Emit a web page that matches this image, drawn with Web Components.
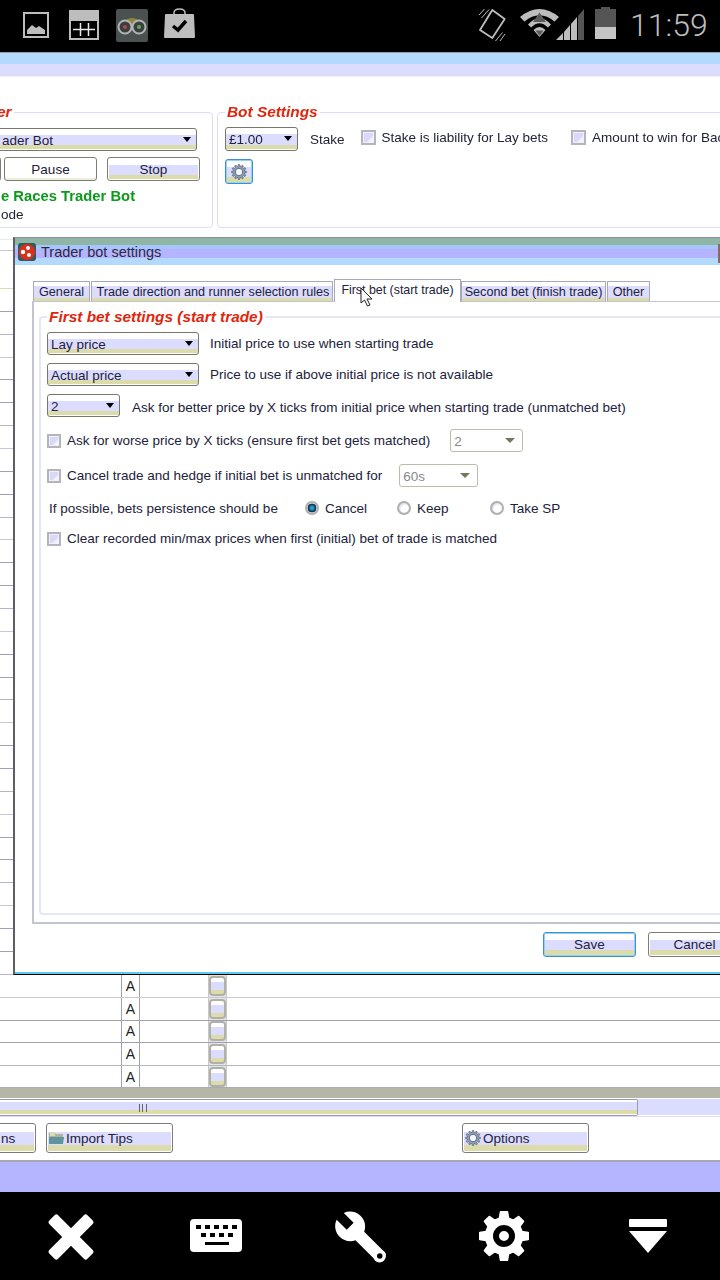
<!DOCTYPE html>
<html>
<head>
<meta charset="utf-8">
<title>Trader bot settings</title>
<style>
html, body {
	margin: 0;
	padding: 0;
	width: 720px;
	height: 1280px;
	overflow: hidden;
	background: #000;
	font: 13.5px "Liberation Sans", Arial, sans-serif;
	color: #22223a;
}
</style>
</head>
<body>
<app-root></app-root>

<script>
const gearPath = (c, outer, root, teeth) => {
	const step = Math.PI * 2 / teeth;
	let d = '';
	for (let i = 0; i < teeth; i++) {
		const a = i * step;
		const points = [
			[root, a - step * 0.32],
			[outer, a - step * 0.18],
			[outer, a + step * 0.18],
			[root, a + step * 0.32]
		];
		points.forEach(([r, t], n) => {
			const x = (c + r * Math.cos(t)).toFixed(2);
			const y = (c + r * Math.sin(t)).toFixed(2);
			d += `${i === 0 && n === 0 ? 'M' : 'L'}${x} ${y}`;
		});
	}
	return d + 'Z';
};

const define = (name, html, setup) => {
	const template = document.createElement('template');
	template.innerHTML = html;

	class Element extends HTMLElement {
		connectedCallback() {
			if (this.shadowRoot) {
				return;
			}
			const shadowRoot = this.attachShadow({ mode: 'open' });
			shadowRoot.appendChild(template.content.cloneNode(true));
			if (setup) {
				setup(shadowRoot, this);
			}
		}
	}

	window.customElements.define(name, Element);
};

define('gear-icon', `
<style>
:host { display: block; width: 16px; height: 16px; flex: none; }
svg { display: block; width: 100%; height: 100%; }
</style>
<svg viewBox="0 0 32 32">
	<path id="body" fill="#8ea0b4" stroke="#5d6c80" stroke-width="1.5"></path>
	<circle cx="16" cy="16" r="7.5" fill="#f4f6fa" stroke="#5d6c80" stroke-width="2"></circle>
</svg>
`, (root) => {
	root.querySelector('#body').setAttribute('d', gearPath(16, 15, 11.5, 12));
});

define('win-button', `
<style>
:host {
	display: flex;
	align-items: center;
	justify-content: center;
	gap: 2px;
	box-sizing: border-box;
	flex: none;
	height: 24px;
	border: 1px solid #7d7d78;
	border-radius: 3px;
	background: linear-gradient(#fff 0 30%, #dcdcff 30% 76%, #dcdcaa 76% 96%, #fff 96%);
	box-shadow: inset 0 0 0 1px #fff;
	color: #22223a;
	font-size: 13.5px;
	white-space: nowrap;
	overflow: hidden;
}
:host([plain]) { background: #fff; box-shadow: inset 0 -2px 0 #eeeed8; }
:host([start]) { justify-content: flex-start; padding-left: 2px; }
:host([focus]) { border-color: #3f8fd0; box-shadow: inset 0 0 0 1px #8fd4f4; }
</style>
<slot></slot>
`);

define('win-select', `
<style>
:host {
	display: flex;
	align-items: center;
	justify-content: space-between;
	box-sizing: border-box;
	flex: none;
	height: 23px;
	padding: 1px 5px 0 3px;
	border: 1px solid #77776a;
	border-radius: 3px;
	background: linear-gradient(#fff 0 28%, #dcdcff 28% 78%, #dcdcaa 78% 96%, #fff 96%);
	color: #22223a;
	font-size: 13.5px;
	white-space: nowrap;
}
:host([disabled]) { background: #fff; border-color: #bdbdae; color: #8a8a8a; padding: 1px 7px 0 3px; }
i {
	width: 0;
	height: 0;
	margin-top: -2px;
	border: 4.5px solid transparent;
	border-top: 5px solid #000;
	border-bottom: 0;
}
:host([disabled]) i { border-top-color: #77775e; border-left-width: 5px; border-right-width: 5px; }
</style>
<span><slot></slot></span><i></i>
`);

define('win-check', `
<style>
:host {
	display: flex;
	align-items: center;
	gap: 6px;
	font-size: 13.5px;
	color: #22223a;
	white-space: nowrap;
}
b {
	flex: none;
	box-sizing: border-box;
	width: var(--check, 15px);
	height: var(--check, 15px);
	border: 2px solid #b4b4bc;
	background: linear-gradient(135deg, #d8d8f8 0 55%, #f4f4ff 75%);
	box-shadow: inset 0 0 0 1px #f0f0f6;
}
</style>
<b></b><span><slot></slot></span>
`);

define('win-radio', `
<style>
:host {
	display: flex;
	align-items: center;
	gap: 6px;
	font-size: 13.5px;
	color: #22223a;
	white-space: nowrap;
}
b {
	flex: none;
	box-sizing: border-box;
	width: 14px;
	height: 14px;
	border: 2px solid #b0b0ac;
	border-radius: 50%;
	background: radial-gradient(circle at 60% 60%, #fff 0 40%, #d8d8f0 75%);
}
:host([checked]) b {
	background: radial-gradient(circle at 50% 50%, #2fa0c0 0 18%, #0c3c62 50%, #0c3c62 60%, #e8e8f0 66%);
}
</style>
<b></b><span><slot></slot></span>
`);

define('group-box', `
<style>
:host {
	display: block;
	box-sizing: border-box;
	border: 1px solid #dcdcfa;
	border-radius: 4px;
	background: #fff;
}
.legend {
	display: block;
	width: fit-content;
	margin: -10px 0 0 var(--legend-left, 8px);
	padding: 0 2px;
	height: 18px;
	line-height: 18px;
	background: #fff;
	color: #e0260c;
	font-size: 15.4px;
	font-weight: bold;
	font-style: italic;
	white-space: nowrap;
}
</style>
<div class="legend"><slot name="legend"></slot></div>
<slot></slot>
`);

define('status-bar', `
<style>
:host {
	display: flex;
	align-items: flex-start;
	flex: none;
	height: 52px;
	background: #000;
	overflow: hidden;
}
svg { display: block; flex: none; overflow: visible; }
.clock {
	margin: 6px 0 0 14px;
	color: #bdbdbd;
	font: 300 32px/38px Roboto, sans-serif;
	white-space: nowrap;
}
</style>
<svg style="margin:12px 0 0 23px" width="26" height="26" viewBox="0 0 26 26">
	<rect x="1" y="1" width="24" height="24" fill="none" stroke="#bdbdbd" stroke-width="2"></rect>
	<path d="M4 22V18l5-5 4 3 3-2 3 2 3 2v4z" fill="#bdbdbd"></path>
</svg>
<svg style="margin:10px 0 0 20px" width="30" height="30" viewBox="0 0 30 30">
	<path d="M0 0h30v30H0z" fill="#bdbdbd"></path>
	<path d="M2 11h26v17H2z" fill="#000"></path>
	<path d="M4 19.500h22M11.500 13v13M19.500 13v13" stroke="#e8e8e8" stroke-width="1.500" fill="none"></path>
</svg>
<svg style="margin:9px 0 0 17px" width="32" height="33" viewBox="0 0 32 33">
	<rect width="32" height="33" rx="2" fill="#4b5151"></rect>
	<path d="M10 11q6-4 12 0l-6 7z" fill="#8e8a3c"></path>
	<circle cx="9" cy="18" r="6.500" fill="#3a3f3f" stroke="#b4b4b4" stroke-width="2"></circle>
	<circle cx="23" cy="18" r="6.500" fill="#3a3f3f" stroke="#b4b4b4" stroke-width="2"></circle>
	<circle cx="9" cy="18" r="2" fill="#b04a4a"></circle>
	<circle cx="23" cy="18" r="2" fill="#62a85a"></circle>
</svg>
<svg style="margin:8px 0 0 16px" width="31" height="31" viewBox="0 0 31 31">
	<path d="M10 7V5q0-4 5.500-4T21 5v2" fill="none" stroke="#bdbdbd" stroke-width="1.500"></path>
	<path d="M2 6h27q1 0 1 1l1 22q0 1-1 1H1q-1 0-1-1L1 7q0-1 1-1z" fill="#bdbdbd"></path>
	<path d="M9 18l5 4 8-9" fill="none" stroke="#000" stroke-width="3.500"></path>
</svg>
<svg style="margin:9px 0 0 283px" width="28" height="33" viewBox="0 0 28 33">
	<path d="M14.300 1L26.700 10 14.300 29 2 21Z" fill="none" stroke="#bdbdbd" stroke-width="1.800" stroke-linejoin="round"></path>
	<path d="M3.500 9L11 .5M1 6L6.500 0M17.500 32L24.500 23.500M22 32L27 25" fill="none" stroke="#bdbdbd" stroke-width="1"></path>
</svg>
<svg style="margin:9px 0 0 14px" width="39" height="30" viewBox="0 0 39 30">
	<path d="M0 8Q19.500-8 39 8L34.500 12.500Q19.500 0 4.500 12.500Z" fill="#bdbdbd"></path>
	<path d="M8 15.500Q19.500 3 31 15.500L28 18.500Q19.500 10 11 18.500Z" fill="#bdbdbd"></path>
	<path d="M13.500 21Q19.500 15 25.500 21L19.500 28Z" fill="#bdbdbd"></path>
	<path d="M19.500 3.500L26 13H13Z" fill="#5c5c5c"></path>
	<path d="M15.500 21.500H23.500L19.500 27Z" fill="#5c5c5c"></path>
</svg>
<svg style="margin:9px 0 0 -3px" width="28" height="31" viewBox="0 0 28 31">
	<path d="M0 31L7 24v7z" fill="#bdbdbd"></path>
	<path d="M8 23l6-7v15H8z" fill="#bdbdbd"></path>
	<path d="M15 15l6-7v23h-6z" fill="#bdbdbd"></path>
	<path d="M22 7l6-7v31h-6z" fill="#555"></path>
</svg>
<svg style="margin:7px 0 0 11px" width="21" height="32" viewBox="0 0 21 32">
	<path d="M6 0h9v2h6v30H0V2h6z" fill="#555"></path>
	<path d="M0 20h21v12H0z" fill="#c4c4c4"></path>
</svg>
<div class="clock">11:59</div>
`);

define('bot-panel', `
<style>
:host {
	display: flex;
	flex: none;
	box-sizing: border-box;
	gap: 4px;
	height: 153px;
	padding: 35px 0 2px;
	margin-left: -10px;
	background: #fff;
}
.left { width: 223px; flex: none; --legend-left: 4px; }
.right { flex: 1; min-width: 0; margin-right: -20px; --legend-left: 7px; }
.sel { margin: 7px 0 0 6px; width: 200px; padding-left: 4px; }
.btns { display: flex; margin: 6px 0 0 5px; gap: 3px; }
.green { margin: 7px 0 0 10px; color: #0b9a1c; font-weight: bold; font-size: 14.800px; line-height: 17px; white-space: nowrap; }
.mode { margin: 2px 0 0 10px; line-height: 16px; white-space: nowrap; }
.row { display: flex; align-items: center; margin: 6px 0 0 7px; white-space: nowrap; }
.row win-select { height: 24px; }
.row win-check { margin-top: -3px; }
.gear { margin: 8px 0 0 7px; width: 28px; height: 25px; }
</style>
<group-box class="left">
	<span slot="legend">er</span>
	<win-select class="sel">ader Bot</win-select>
	<div class="btns">
		<win-button plain style="width:5px"></win-button>
		<win-button plain style="width:93px">Pause</win-button>
		<win-button style="width:93px;margin-left:7px">Stop</win-button>
	</div>
	<div class="green">e Races Trader Bot</div>
	<div class="mode">ode</div>
</group-box>
<group-box class="right">
	<span slot="legend">Bot Settings</span>
	<div class="row">
		<win-select style="width:73px">£1.00</win-select>
		<span style="margin-left:12px">Stake</span>
		<win-check style="margin-left:16px">Stake is liability for Lay bets</win-check>
		<win-check style="margin-left:23px">Amount to win for Bac</win-check>
	</div>
	<win-button class="gear" focus><gear-icon></gear-icon></win-button>
</group-box>
`);

define('data-grid', `
<style>
:host {
	display: flex;
	flex-direction: column;
	flex: 1;
	min-height: 0;
	background: #fff;
	border-top: 1px solid transparent;
	font-size: 14px;
}
.head { flex: none; height: 58px; box-sizing: border-box; }
.head div { height: 1px; }
.head .a { margin-top: 8px; background: #e8e8f4; }
.head .b { margin-top: 10px; background: #c8c8d4; }
.head .c { margin-top: 37px; background: #dcdcaa; }
.row {
	flex: 1;
	min-height: 0;
	display: grid;
	grid-template-columns: 121px 19px 68px 19px 1fr;
	box-sizing: border-box;
	border-bottom: 1px solid #a0a0b4;
}
.row:nth-child(4n+2) { border-bottom-color: #b4b4c4; }
.row:nth-child(4n+3) { border-bottom-color: #c8c8d6; }
.row:last-child { border-bottom: 0; }
.row > span { display: flex; align-items: center; justify-content: center; box-sizing: border-box; }
.letter { border-left: 1px solid #a0a0b8; border-right: 1px solid #a0a0b8; color: #222; }
.cell { border-left: 1px solid #c8c8c8; border-right: 1px solid #c8c8c8; background: #e4e4e8; }
.cell i {
	width: 17px;
	height: 20px;
	box-sizing: border-box;
	border: 2px solid #b0b0a6;
	border-radius: 4px;
	background: linear-gradient(#fff 0 25%, #dcdcff 25% 72%, #dcdcaa 72%);
}
</style>
<div class="head"><div class="a"></div><div class="b"></div><div class="c"></div></div>
<div id="rows" style="display:contents"></div>
`, (root) => {
	const rows = root.querySelector('#rows');
	const total = 35;
	for (let i = 0; i < total; i++) {
		const row = document.createElement('div');
		row.className = 'row';
		// only the last rows are not under the dialog
		const letter = i >= total - 5 ? 'A' : '';
		row.innerHTML = `<span></span><span class="letter">${letter}</span><span></span><span class="cell"><i></i></span><span></span>`;
		rows.appendChild(row);
	}
});

define('scroll-strip', `
<style>
:host { display: block; flex: none; background: #fff; }
.tan { height: 10px; background: #b5b5a8; border-top: 1px solid #aaaabc; margin-top: -1px; }
.track { display: flex; height: 17px; margin-top: 1px; background: linear-gradient(#dcdcff 0 94%, #fff 94%); }
.thumb {
	display: flex;
	align-items: center;
	box-sizing: border-box;
	width: 648px;
	margin-left: -10px;
	padding-left: 149px;
	border: 1px solid #9a9aa8;
	border-width: 1px 1px 1px 0;
	border-radius: 0 2px 2px 0;
	background: linear-gradient(#fff 0 12%, #dcdcff 12% 68%, #dcdcaa 68% 92%, #fff 92%);
}
.grip { width: 9px; height: 8px; background: repeating-linear-gradient(90deg, #666 0 1px, transparent 1px 3.500px); }
.line { height: 1px; background: #dcdcfa; }
</style>
<div class="tan"></div>
<div class="track"><div class="thumb"><div class="grip"></div></div></div>
<div class="line"></div>
`);

define('tool-strip', `
<style>
:host {
	display: flex;
	flex: none;
	box-sizing: border-box;
	height: 45px;
	padding: 6px 0 0 0;
	gap: 10px;
	margin-left: -10px;
	background: #fff;
	border-bottom: 2px solid #a8a8b0;
}
win-button { height: 30px; font-size: 13.5px; }
svg { flex: none; display: block; }
span { padding-top: 1px; }
</style>
<win-button style="width:46px" start><span style="margin-left:8px">ns</span></win-button>
<win-button style="width:127px" start>
	<svg width="15" height="15" viewBox="0 0 15 15">
		<path d="M0 2h6l1 1h7v3H0z" fill="#b4b494"></path>
		<path d="M1 1h5v4H1z" fill="#dcdcb4"></path>
		<path d="M0 13V6h15l-1 7z" fill="#5e93a2"></path>
	</svg>
	<span>Import Tips</span>
</win-button>
<win-button style="width:127px;margin-left:279px" start>
	<gear-icon></gear-icon>
	<span>Options</span>
</win-button>
`);

define('nav-bar', `
<style>
:host {
	display: grid;
	grid-template-columns: repeat(5, 1fr);
	flex: none;
	height: 88px;
	background: #000;
	place-items: center;
}
svg { display: block; }
</style>
<svg width="52" height="52" viewBox="-26 -26 52 52" style="margin:1px 2px 0 0">
	<rect x="-27" y="-6.250" width="54" height="12.500" rx="2.500" transform="rotate(45)" fill="#fff"></rect>
	<rect x="-27" y="-6.250" width="54" height="12.500" rx="2.500" transform="rotate(-45)" fill="#fff"></rect>
</svg>
<svg width="52" height="33" viewBox="0 0 52 33" style="margin-top:-1px">
	<rect width="52" height="33" rx="4" fill="#fff"></rect>
	<path d="M6 6h5v4H6zM15 6h5v4h-5zM24 6h5v4h-5zM33 6h5v4h-5zM42 6h5v4h-5zM11 14h5v4h-5zM20 14h5v4h-5zM29 14h5v4h-5zM38 14h5v4h-5zM15 23h24v3H15z" fill="#000"></path>
</svg>
<svg width="55" height="55" viewBox="0 0 24 24">
	<path d="M22.700 19l-9.100-9.100c.9-2.300.4-5-1.500-6.900-2-2-5-2.400-7.400-1.300L9 6 6 9 1.600 4.700C.4 7.100.9 10.100 2.900 12.100c1.900 1.900 4.600 2.400 6.900 1.500l9.100 9.100c.4.400 1 .4 1.400 0l2.300-2.300c.5-.4.500-1.100.1-1.400z" fill="#fff"></path>
	<circle cx="20.300" cy="20.500" r="2.800" fill="#fff"></circle>
	<circle cx="20.400" cy="20.500" r="1.200" fill="#000"></circle>
</svg>
<svg id="gear" width="52" height="52" viewBox="0 0 52 52" style="margin-top:-1px">
	<path fill="#fff" stroke="#fff" stroke-width="1.500" stroke-linejoin="round"></path>
	<circle cx="26" cy="26" r="8" fill="#fff" stroke="#000" stroke-width="6"></circle>
</svg>
<svg width="38" height="34" viewBox="0 0 38 34" style="margin-top:-1px">
	<rect width="38" height="8" rx="1" fill="#fff"></rect>
	<path d="M0 12h38L19 34z" fill="#fff"></path>
</svg>
`, (root) => {
	root.querySelector('#gear path').setAttribute('d', gearPath(26, 24.5, 18.5, 8));
});

define('settings-dialog', `
<style>
:host {
	position: absolute;
	left: 13px;
	top: 237px;
	display: flex;
	flex-direction: column;
	box-sizing: border-box;
	width: 760px;
	height: 738px;
	background: #fff;
	border-top: 1px solid #8c8c98;
	border-left: 2px solid #5e5e66;
	box-shadow: inset 0 -2px 0 #62c8f0;
	border-bottom: 1px solid #000;
	--check: 14px;
}
.title {
	display: flex;
	align-items: center;
	flex: none;
	height: 27px;
	gap: 5px;
	padding-left: 3px;
	background: linear-gradient(#8fb5a5 0 26%, #a5c5ff 26% 41%, #b5b5ff 41% 74%, #b3d9ff 74%);
	font-size: 14.500px;
	color: #2a2a3c;
}
.title svg { flex: none; display: block; }
.title span { padding-top: 1px; }
.close { position: absolute; left: 703px; top: 6px; width: 20px; height: 19px; background: #8a6a5c; }
.tabs {
	display: flex;
	align-items: flex-end;
	flex: none;
	height: 23px;
	margin: 14px 0 0 18px;
	position: relative;
	z-index: 1;
}
.tab {
	box-sizing: border-box;
	height: 20px;
	margin-bottom: 1px;
	margin-right: 1px;
	padding: 3px 0 0 0;
	text-align: center;
	border: 1px solid #a8a8b8;
	border-bottom: 0;
	background: linear-gradient(#fff 0 22%, #dcdcff 22% 84%, #dcdcaa 84%);
	font-size: 12.650px;
	color: #22223a;
	white-space: nowrap;
}
.tab.on { height: 23px; margin: 0; background: #fff; padding-top: 3px; font-size: 12.400px; }
.pane {
	flex: none;
	box-sizing: border-box;
	height: 623px;
	margin: -1px 0 0 17px;
	padding: 14px 0 7px 5px;
	border: 2px solid #c4c4d0;
	border-width: 1px 0 2px 2px;
}
group-box { height: 100%; border-width: 2px; border-color: #e6e6fa; border-right: 0; --legend-left: 6px; }
.form { display: flex; flex-direction: column; padding: 6px 0 0 6px; }
.line { display: flex; align-items: center; white-space: nowrap; }
.line > span { color: #22223a; }
.low { padding-top: 3px; }
.buttons { display: flex; flex: none; margin: 8px 0 0 528px; gap: 12px; }
.buttons win-button { width: 93px; height: 25px; }
.cursor { position: absolute; left: 345px; top: 49px; z-index: 2; display: block; }
</style>
<div class="title">
	<svg width="18" height="18" viewBox="0 0 18 18">
		<rect width="18" height="18" rx="3" fill="#2f5a60"></rect>
		<circle cx="9" cy="9" r="8" fill="#d8301c"></circle>
		<circle cx="5" cy="9" r="2.200" fill="#fff"></circle>
		<circle cx="10" cy="5" r="2" fill="#fff"></circle>
		<circle cx="11" cy="12" r="2" fill="#fff"></circle>
	</svg>
	<span>Trader bot settings</span>
</div>
<div class="close"></div>
<div class="tabs">
	<div class="tab" style="width:57px">General</div>
	<div class="tab" style="width:242px;padding-left:2px">Trade direction and runner selection rules</div>
	<div class="tab on" style="width:127px">First bet (start trade)</div>
	<div class="tab" style="width:145px">Second bet (finish trade)</div>
	<div class="tab" style="width:43px">Other</div>
</div>
<div class="pane">
	<group-box>
		<span slot="legend">First bet settings (start trade)</span>
		<div class="form">
			<div class="line">
				<win-select style="width:152px">Lay price</win-select>
				<span style="margin-left:11px">Initial price to use when starting trade</span>
			</div>
			<div class="line" style="margin-top:8px">
				<win-select style="width:152px">Actual price</win-select>
				<span style="margin-left:11px">Price to use if above initial price is not available</span>
			</div>
			<div class="line" style="margin-top:8px">
				<win-select style="width:73px">2</win-select>
				<span class="low" style="margin-left:12px">Ask for better price by X ticks from initial price when starting trade (unmatched bet)</span>
			</div>
			<div class="line" style="margin-top:12px">
				<win-check>Ask for worse price by X ticks (ensure first bet gets matched)</win-check>
				<win-select disabled style="width:73px;margin-left:20px">2</win-select>
			</div>
			<div class="line" style="margin-top:12px">
				<win-check>Cancel trade and hedge if initial bet is unmatched for</win-check>
				<win-select disabled style="width:79px;margin-left:17px">60s</win-select>
			</div>
			<div class="line" style="margin-top:11px;height:20px">
				<span style="margin-left:2px;width:256px;padding-top:1px">If possible, bets persistence should be</span>
				<win-radio checked style="width:92px">Cancel</win-radio>
				<win-radio style="width:92px">Keep</win-radio>
				<win-radio style="margin-left:1px">Take SP</win-radio>
			</div>
			<div class="line" style="margin-top:13px">
				<win-check>Clear recorded min/max prices when first (initial) bet of trade is matched</win-check>
			</div>
		</div>
	</group-box>
</div>
<div class="buttons">
	<win-button focus>Save</win-button>
	<win-button>Cancel</win-button>
</div>
<svg class="cursor" width="14" height="20" viewBox="0 0 14 20">
	<path d="M1 1v15l3.500-3 3 6 2.500-1-3-6h5z" fill="#fff" stroke="#222" stroke-width="1"></path>
</svg>
`);

define('app-root', `
<style>
:host {
	display: flex;
	flex-direction: column;
	position: relative;
	width: 720px;
	height: 1280px;
	overflow: hidden;
	background: #fff;
}
.strip-a { flex: none; height: 12px; background: #b3d9ff; border-top: 1px solid #8aa0b8; box-sizing: border-box; }
.strip-b { flex: none; height: 13px; background: #dcdcff; border-bottom: 1px solid #f0f0fa; box-sizing: border-box; }
.foot { flex: none; height: 30px; background: #b5b5ff; }
.page { flex: 1; min-height: 0; display: flex; flex-direction: column; filter: blur(.3px); }
</style>
<status-bar></status-bar>
<div class="strip-a"></div>
<div class="strip-b"></div>
<div class="page">
	<bot-panel></bot-panel>
	<data-grid></data-grid>
	<scroll-strip></scroll-strip>
	<tool-strip></tool-strip>
</div>
<div class="foot"></div>
<nav-bar></nav-bar>
<settings-dialog></settings-dialog>
`);
</script>
</body>
</html>
